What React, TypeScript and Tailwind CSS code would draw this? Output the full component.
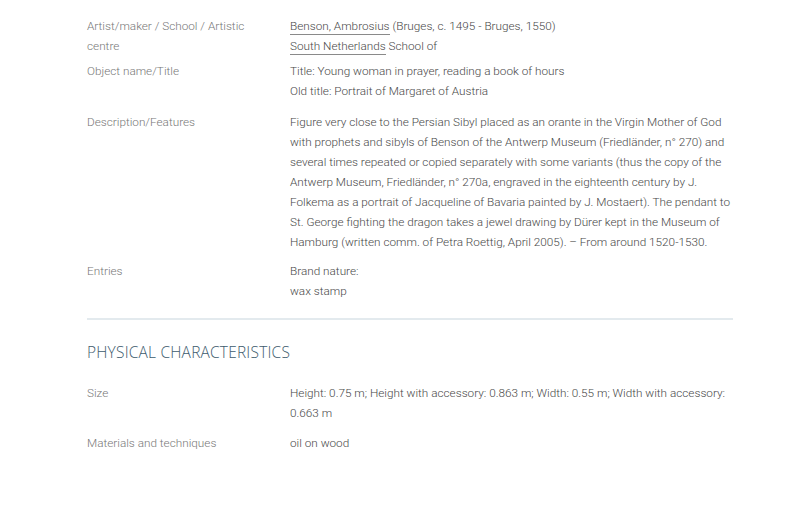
import { FC, ReactNode } from "react";

const Row: FC<{ label: ReactNode; children: ReactNode; className?: string }> = ({ label, children, className }) => (
  <div className={`flex flex-row ${className ?? ""}`}>
    <div className="w-[203px] shrink-0 text-[#777]">{label}</div>
    <div className="flex-1 text-[#484848]">{children}</div>
  </div>
);

const Link: FC<{ children: ReactNode }> = ({ children }) => (
  <span className="border-b border-[#8a8a8a] pb-[1px]">{children}</span>
);

export default function App() {
  return (
    <div className="w-[800px] h-[517px] bg-white font-['Roboto',sans-serif] font-light text-[11.75px] leading-[20px]">
      <div className="ml-[87px] w-[650px] pt-[16px]">
        <Row label={<>Artist/maker / School / Artistic<br />centre</>}>
          <p><Link>Benson, Ambrosius</Link> (Bruges, c. 1495 - Bruges, 1550)</p>
          <p><Link>South Netherlands</Link> School of</p>
        </Row>
        <Row label="Object name/Title" className="mt-[5px]">
          <p>Title: Young woman in prayer, reading a book of hours</p>
          <p>Old title: Portrait of Margaret of Austria</p>
        </Row>
        <Row label="Description/Features" className="mt-[11px]">
          <p>
            Figure very close to the Persian Sibyl placed as an orante in the Virgin Mother of God with prophets and sibyls of Benson of the Antwerp Museum (Friedländer, n° 270) and several times repeated or copied separately with some variants (thus the copy of the Antwerp Museum, Friedländer, n° 270a, engraved in the eighteenth century by J. Folkema as a portrait of Jacqueline of Bavaria painted by J. Mostaert). The pendant to St. George fighting the dragon takes a jewel drawing by Dürer kept in the Museum of Hamburg (written comm. of Petra Roettig, April 2005). – From around 1520-1530.
          </p>
        </Row>
        <Row label="Entries" className="mt-[9px]">
          <p>Brand nature:</p>
          <p>wax stamp</p>
        </Row>
        <div className="mt-[17px] w-[646px] h-[2px] bg-[#e3eaee]" />
        <h2 className="mt-[22px] font-['Open_Sans',sans-serif] font-light text-[15.5px] leading-[20px] tracking-[0.2px] text-[#3d5b6d] uppercase">
          Physical characteristics
        </h2>
        <Row label="Size" className="mt-[21px]">
          <p>Height: 0.75 m; Height with accessory: 0.863 m; Width: 0.55 m; Width with accessory: 0.663 m</p>
        </Row>
        <Row label="Materials and techniques" className="mt-[10px]">
          <p>oil on wood</p>
        </Row>
      </div>
    </div>
  );
}
